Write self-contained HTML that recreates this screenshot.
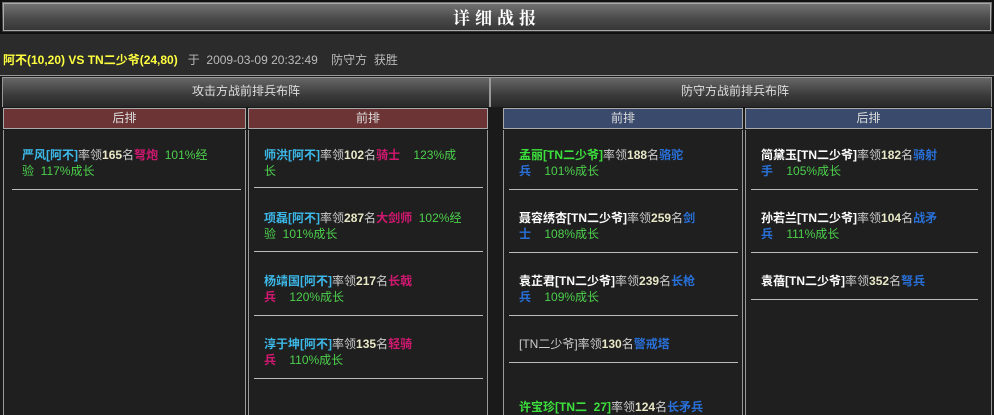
<!DOCTYPE html><html><head><meta charset="utf-8"><style>
*{margin:0;padding:0;box-sizing:border-box}
body{width:994px;height:415px;overflow:hidden;background:#2b2b2b;font-family:"Liberation Sans","Noto Sans CJK SC",sans-serif;font-size:12px;color:#ccc;position:relative}
.a{position:absolute}
.title{left:0;top:0;width:994px;height:34px;background:linear-gradient(#777,#4a4a4a 55%,#333);border:2px solid #111;outline:1px solid #aaa;outline-offset:-4px;text-align:center;color:#fff;font-family:"Noto Serif CJK SC",serif;font-size:17px;line-height:30px;font-weight:bold;letter-spacing:5px}
.info{left:3px;top:51px;font-size:12px;color:#bbb}
.y{color:#ffff40;font-weight:bold}
.sec{top:77px;height:30px;background:linear-gradient(#666,#3a3a3a 60%,#282828);border:1px solid #999;border-bottom:none;color:#ddd;text-align:center;line-height:26px;font-size:12px}
.ch{top:108px;height:21px;border:1px solid #aaa;color:#ddd;text-align:center;line-height:19px;font-size:12px}
.red{background:#6c3434}.blue{background:#394a6c}
.col{top:130px;height:285px;background:#1f1f1f;border-left:1px solid #999;border-right:1px solid #999}
.e{position:absolute;font-size:12px;line-height:16px;color:#ccc}
.sep{position:absolute;height:1px;background:#bbb}
.c{color:#3cb8e8;font-weight:bold}.w{color:#fff;font-weight:bold}.g{color:#3ce03c;font-weight:bold}
.n{color:#e8e8c8;font-weight:bold}.m{color:#d01870;font-weight:bold}.b{color:#2870d8;font-weight:bold}.gr{color:#4cd04c}
</style></head><body>
<div class="a title">详细战报</div>
<div class="a info"><span class="y">阿不(10,20) VS TN二少爷(24,80)</span>&nbsp;&nbsp;&nbsp;于&nbsp;&nbsp;2009-03-09 20:32:49&nbsp;&nbsp;&nbsp;&nbsp;防守方&nbsp;&nbsp;获胜</div>
<div class="a" style="left:0;top:75px;width:994px;height:340px;background:#1a1a1a;border-top:1px solid #999"></div>
<div class="a sec" style="left:2px;width:488px">攻击方战前排兵布阵</div>
<div class="a sec" style="left:490px;width:502px;padding-right:12px">防守方战前排兵布阵</div>
<div class="a ch red" style="left:3px;width:243px">后排</div>
<div class="a ch red" style="left:248px;width:240px">前排</div>
<div class="a ch blue" style="left:503px;width:240px">前排</div>
<div class="a ch blue" style="left:745px;width:247px">后排</div>
<div class="a col" style="left:3px;width:243px"></div>
<div class="a col" style="left:248px;width:240px"></div>
<div class="a" style="left:488px;top:108px;width:15px;height:307px;background:#1a1a1a"></div>
<div class="a col" style="left:503px;width:240px"></div>
<div class="a col" style="left:745px;width:247px"></div>

<div class="e" style="left:22px;top:147px;width:210px"><span class="c">严风[阿不]</span>率领<span class="n">165</span>名<span class="m">弩炮</span>&nbsp;&nbsp;<span class="gr">101%经<br>验&nbsp;&nbsp;117%成长</span></div>
<div class="sep" style="left:12px;top:189px;width:229px"></div>

<div class="e" style="left:264px;top:147px;width:210px"><span class="c">师洪[阿不]</span>率领<span class="n">102</span>名<span class="m">骑士</span>&nbsp;&nbsp;&nbsp;&nbsp;<span class="gr">123%成<br>长</span></div>
<div class="sep" style="left:254px;top:187px;width:229px"></div>
<div class="e" style="left:264px;top:210px;width:215px"><span class="c">项磊[阿不]</span>率领<span class="n">287</span>名<span class="m">大剑师</span>&nbsp;&nbsp;<span class="gr">102%经<br>验&nbsp;&nbsp;101%成长</span></div>
<div class="sep" style="left:254px;top:251px;width:229px"></div>
<div class="e" style="left:264px;top:273px"><span class="c">杨靖国[阿不]</span>率领<span class="n">217</span>名<span class="m">长戟<br>兵</span>&nbsp;&nbsp;&nbsp;&nbsp;<span class="gr">120%成长</span></div>
<div class="sep" style="left:254px;top:315px;width:229px"></div>
<div class="e" style="left:264px;top:336px"><span class="c">淳于坤[阿不]</span>率领<span class="n">135</span>名<span class="m">轻骑<br>兵</span>&nbsp;&nbsp;&nbsp;&nbsp;<span class="gr">110%成长</span></div>
<div class="sep" style="left:254px;top:378px;width:229px"></div>

<div class="e" style="left:519px;top:147px"><span class="g">孟丽[TN二少爷]</span>率领<span class="n">188</span>名<span class="b">骆驼<br>兵</span>&nbsp;&nbsp;&nbsp;&nbsp;<span class="gr">101%成长</span></div>
<div class="sep" style="left:509px;top:189px;width:229px"></div>
<div class="e" style="left:519px;top:210px"><span class="w">聂容绣杏[TN二少爷]</span>率领<span class="n">259</span>名<span class="b">剑<br>士</span>&nbsp;&nbsp;&nbsp;&nbsp;<span class="gr">108%成长</span></div>
<div class="sep" style="left:509px;top:252px;width:229px"></div>
<div class="e" style="left:519px;top:273px"><span class="w">袁芷君[TN二少爷]</span>率领<span class="n">239</span>名<span class="b">长枪<br>兵</span>&nbsp;&nbsp;&nbsp;&nbsp;<span class="gr">109%成长</span></div>
<div class="sep" style="left:509px;top:315px;width:229px"></div>
<div class="e" style="left:519px;top:336px">[TN二少爷]率领<span class="n">130</span>名<span class="b">警戒塔</span></div>
<div class="sep" style="left:509px;top:362px;width:229px"></div>
<div class="e" style="left:519px;top:399px"><span class="g">许宝珍[TN二&nbsp;&nbsp;27]</span>率领<span class="n">124</span>名<span class="b">长矛兵</span></div>

<div class="e" style="left:761px;top:147px"><span class="w">简黛玉[TN二少爷]</span>率领<span class="n">182</span>名<span class="b">骑射<br>手</span>&nbsp;&nbsp;&nbsp;&nbsp;<span class="gr">105%成长</span></div>
<div class="sep" style="left:751px;top:189px;width:227px"></div>
<div class="e" style="left:761px;top:210px"><span class="w">孙若兰[TN二少爷]</span>率领<span class="n">104</span>名<span class="b">战矛<br>兵</span>&nbsp;&nbsp;&nbsp;&nbsp;<span class="gr">111%成长</span></div>
<div class="sep" style="left:751px;top:252px;width:227px"></div>
<div class="e" style="left:761px;top:273px"><span class="w">袁蓓[TN二少爷]</span>率领<span class="n">352</span>名<span class="b">弩兵</span></div>
<div class="sep" style="left:751px;top:299px;width:227px"></div>
</body></html>
